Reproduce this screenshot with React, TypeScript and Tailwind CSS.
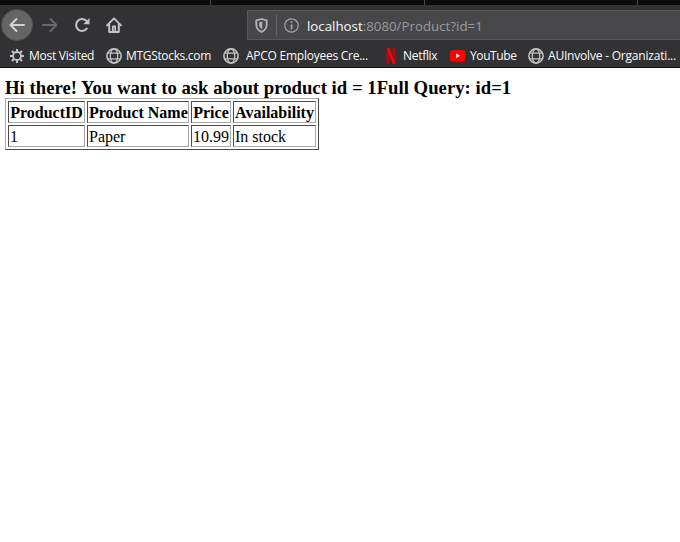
import type { ReactNode } from 'react';

function Globe() {
  return (
    <svg width="16" height="16" viewBox="0 0 16 16" fill="none" stroke="#c3c3c4" strokeWidth="1.3">
      <circle cx="8" cy="8" r="7.1" strokeWidth="1.6" />
      <ellipse cx="8" cy="8" rx="3.7" ry="7.1" />
      <path d="M1.5 5.1h13M1.5 10.9h13" />
    </svg>
  );
}

function Gear() {
  return (
    <svg width="14" height="14" viewBox="0 0 14 14" fill="none" stroke="#c3c3c4">
      <circle cx="7" cy="7" r="4" strokeWidth="1.8" />
      <path strokeWidth="2" d="M7 0v3M7 11v3M0 7h3M11 7h3M2 2l2 2M10 10l2 2M12 2l-2 2M4 10l-2 2" />
    </svg>
  );
}

function Netflix() {
  return (
    <svg width="10" height="16" viewBox="0 0 10 16">
      <path fill="#b9070f" d="M0.5 0h3v15.5l-3 .5zM6.5 0h3v16l-3-.5z" />
      <path fill="#e50914" d="M0.5 0h3l6 16-3-.5z" />
    </svg>
  );
}

function YouTube() {
  return (
    <svg width="16" height="12" viewBox="0 0 16 12">
      <rect width="15.5" height="11.5" rx="3" fill="#ff0000" />
      <path fill="#fff" d="M6.200 3.400v4.600l4-2.300z" />
    </svg>
  );
}

function Bookmark({ icon, children, className }: { icon: ReactNode; children: string; className: string }) {
  return (
    <div className="flex h-5 shrink-0 items-center">
      {icon}
      <span className={'whitespace-nowrap text-[12px] leading-5 text-[#f9f9fa] ' + className}>{children}</span>
    </div>
  );
}

const cell = 'h-[22px] border border-t-[#4a4a4a] border-l-[#4a4a4a] border-r-[#a9a9a9] border-b-[#a9a9a9] px-px pt-px pb-0 leading-[19px] whitespace-nowrap';
const th = cell + ' text-center';
const td = cell + ' text-left';

export default function App() {
  return (
    <div className="h-[542px] w-[680px] overflow-hidden bg-white">
      <header className="h-[68px] border-b border-[#0c0c0d] bg-[#323234] font-['Open_Sans','Noto_Sans',sans-serif]">
        <div className="flex h-[5px] bg-[#0c0c0d]">
          <div className="w-[211px] border-r border-[#4a4a4c]" />
          <div className="w-[214px] border-r border-[#4a4a4c]" />
          <div className="w-[213px] border-r border-[#4a4a4c]" />
        </div>
        <div className="flex h-[40px] items-center">
          <div className="ml-px flex size-8 items-center justify-center rounded-full border border-[#505052] bg-[#656566]">
            <svg width="16" height="16" viewBox="0 0 16 16" fill="none" stroke="#d2d2d3" strokeWidth="2" strokeLinecap="round" strokeLinejoin="round">
              <path d="M15 8H1.5M7.5 2L1.5 8l6 6" />
            </svg>
          </div>
          <svg className="ml-[9px]" width="16" height="16" viewBox="0 0 16 16" fill="none" stroke="#69696b" strokeWidth="2" strokeLinecap="round" strokeLinejoin="round">
            <path d="M1 8h13.5M8.5 2l6 6-6 6" />
          </svg>
          <svg className="ml-4" width="16" height="16" viewBox="0 0 16 16">
            <path d="M12.8 11.7A6 6 0 1 1 12.6 4" fill="none" stroke="#c3c3c4" strokeWidth="2.1" strokeLinecap="round" />
            <path d="M15.5 1v6.2H9.2z" fill="#c3c3c4" />
          </svg>
          <svg className="ml-4" width="16" height="16" viewBox="0 0 16 16" fill="none" stroke="#c3c3c4" strokeWidth="2" strokeLinecap="round" strokeLinejoin="round">
            <path d="M1 8.400L8 1.400l7 7" />
            <path d="M3.200 7.500V15h9.600V7.500" />
            <path d="M6.800 14.500V9.500h2.400v5" strokeWidth="1.800" />
          </svg>
          <div className="ml-[125px] flex h-[30px] flex-1 items-center border-y border-l border-[#58585a] bg-[#474749]">
            <svg className="ml-[7px]" width="13" height="15" viewBox="0 0 13 15">
              <path d="M6.500 1L11.700 2.300v4.200c0 3.500-2 6-5.200 7.400-3.200-1.400-5.200-3.900-5.200-7.400V2.300z" fill="none" stroke="#b5b5b7" strokeWidth="1.800" strokeLinejoin="round" />
              <path d="M7.300 3.700v7.600C5 10 4.200 8.400 4.200 6.400V4.300z" fill="#b5b5b7" />
            </svg>
            <div className="ml-2 h-[22px] w-px bg-[#5d636b]" />
            <svg className="ml-[7px]" width="15" height="15" viewBox="0 0 15 15">
              <circle cx="7.5" cy="7.5" r="6.7" fill="none" stroke="#a4a4a6" strokeWidth="1.2" />
              <path d="M6.7 6.500h1.700v5H6.700zM6.700 3.300h1.700v1.800H6.700z" fill="#a4a4a6" />
            </svg>
            <span className="ml-2 whitespace-nowrap pt-[2px] text-[13.3px] leading-5 text-[#99999b]">
              <span className="text-[#f9f9fa]">localhost</span>:8080/Product?id=1
            </span>
          </div>
        </div>
        <nav className="flex h-[22px] items-center pl-[10px]">
          <div className="w-[96px]"><Bookmark icon={<Gear />} className="ml-[5px] tracking-[-0.27px]">Most Visited</Bookmark></div>
          <div className="w-[117px]"><Bookmark icon={<Globe />} className="ml-1 tracking-[-0.33px]">MTGStocks.com</Bookmark></div>
          <div className="w-[163px]"><Bookmark icon={<Globe />} className="ml-[7px] tracking-[-0.25px]">APCO Employees Cre...</Bookmark></div>
          <div className="w-[64px]"><Bookmark icon={<Netflix />} className="ml-[7px] tracking-[-0.3px]">Netflix</Bookmark></div>
          <div className="w-[78px]"><Bookmark icon={<YouTube />} className="ml-1 tracking-[-0.4px]">YouTube</Bookmark></div>
          <div className="w-[152px]"><Bookmark icon={<Globe />} className="ml-1 tracking-[-0.2px]">AUInvolve - Organizati...</Bookmark></div>
        </nav>
      </header>
      <main className="pl-[5px] pt-[9px] font-['Liberation_Serif','Times_New_Roman',serif] text-base text-black">
        <h3 className="h-[21px] whitespace-nowrap text-[18.72px] font-bold leading-[21px] tracking-[0.016px]">
          Hi there! You want to ask about product id = 1Full Query: id=1
        </h3>
        <table className="w-[314px] table-fixed border-separate border-spacing-[2px] border border-t-[#a9a9a9] border-l-[#a9a9a9] border-r-[#4a4a4a] border-b-[#4a4a4a]">
          <colgroup>
            <col className="w-[77px]" />
            <col className="w-[102px]" />
            <col className="w-[40px]" />
            <col className="w-[83px]" />
          </colgroup>
          <thead>
            <tr>
              <th className={th}>ProductID</th>
              <th className={th}>Product Name</th>
              <th className={th}>Price</th>
              <th className={th}>Availability</th>
            </tr>
          </thead>
          <tbody>
            <tr>
              <td className={td}>1</td>
              <td className={td}>Paper</td>
              <td className={td}>10.99</td>
              <td className={td}>In stock</td>
            </tr>
          </tbody>
        </table>
      </main>
    </div>
  );
}
